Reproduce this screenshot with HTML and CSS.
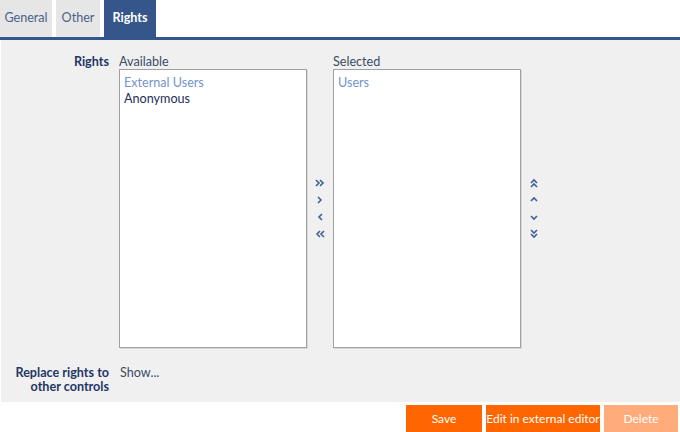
FILE: index.html
```html
<!DOCTYPE html>
<html>
<head>
<meta charset="utf-8">
<link rel="stylesheet" href="styles.css">
</head>
<body>
<div class="tabs">
  <div class="tab">General</div>
  <div class="tab">Other</div>
  <div class="tab active">Rights</div>
</div>
<div class="bar"></div>
<div class="panel">
  <div class="row rights-row">
    <div class="label">Rights</div>
    <div class="picker">
      <div class="col">
        <div class="caption">Available</div>
        <div class="listbox">
          <div class="group">External Users</div>
          <div class="item">Anonymous</div>
        </div>
      </div>
      <div class="arrows">
        <svg viewBox="0 0 10 10"><path d="M1 2l3 3-3 3M5 2l3 3-3 3"/></svg>
        <svg viewBox="0 0 10 10"><path d="M3 2l3 3-3 3"/></svg>
        <svg viewBox="0 0 10 10"><path d="M7 2l-3 3 3 3"/></svg>
        <svg viewBox="0 0 10 10"><path d="M5 2l-3 3 3 3M9 2l-3 3 3 3"/></svg>
      </div>
      <div class="col">
        <div class="caption">Selected</div>
        <div class="listbox">
          <div class="group">Users</div>
        </div>
      </div>
      <div class="arrows">
        <svg viewBox="0 0 10 10"><path d="M2 5l3-3 3 3M2 9l3-3 3 3"/></svg>
        <svg viewBox="0 0 10 10"><path d="M2 6l3-3 3 3"/></svg>
        <svg viewBox="0 0 10 10"><path d="M2 4l3 3 3-3"/></svg>
        <svg viewBox="0 0 10 10"><path d="M2 1l3 3 3-3M2 5l3 3 3-3"/></svg>
      </div>
    </div>
  </div>
  <div class="row replace-row">
    <div class="label">Replace rights to<br>other controls</div>
    <div class="value">Show...</div>
  </div>
</div>
<div class="footer">
  <button class="btn">Save</button>
  <button class="btn">Edit in external editor</button>
  <button class="btn disabled">Delete</button>
</div>
</body>
</html>
```
FILE: styles.css
```css
html, body {
  margin: 0;
  padding: 0;
  background: #fff;
}
body {
  font-family: Lato, "Open Sans", sans-serif;
  font-size: 12.6px;
  width: 680px;
  height: 432px;
  overflow: hidden;
}
.tabs {
  display: flex;
  gap: 4px;
  height: 37px;
}
.tab {
  height: 37px;
  line-height: 36px;
  background: #e6e6e6;
  color: #4b6389;
  text-align: center;
}
.tab:first-child { width: 52px; }
.tab:nth-child(2) { width: 44px; }
.tab.active {
  width: 52px;
  background: #34568a;
  color: #fff;
  font-weight: bold;
}
.bar {
  height: 3px;
  background: #34568a;
}
.panel {
  background: #f0f0f0;
  height: 347px;
  padding-top: 15px;
  margin-left: 1px;
}
.row {
  display: grid;
  grid-template-columns: 108px auto;
  column-gap: 10px;
  line-height: 13.5px;
}
.label {
  text-align: right;
  font-weight: bold;
  color: #1f3765;
}
.picker {
  display: flex;
  align-items: center;
}
.col {
  display: flex;
  flex-direction: column;
}
.caption {
  color: #3b4c66;
  height: 14px;
  line-height: 13px;
}
.listbox {
  width: 188px;
  height: 279px;
  background: #fff;
  border: 1px solid #a0a0a0;
  box-shadow: 1px 1px 0 #d8d8d8;
  padding: 5px 4px;
  box-sizing: border-box;
  line-height: 16px;
}
.group { color: #7394c9; }
.item { color: #1d2f58; }
.arrows {
  width: 26px;
  display: flex;
  flex-direction: column;
  align-items: center;
  gap: 7px;
  padding-top: 14px;
}
.arrows svg {
  width: 10px;
  height: 10px;
  fill: none;
  stroke: #3f5f99;
  stroke-width: 1.6;
}
.replace-row {
  margin-top: 18px;
}
.value {
  color: #3b4c66;
  padding-left: 1px;
}
.footer {
  display: flex;
  justify-content: flex-end;
  gap: 4px;
  padding: 3px 2px 0 0;
}
.btn {
  font-family: inherit;
  font-size: 12px;
  height: 27px;
  border: none;
  background: #ff6600;
  color: #fff;
  padding: 0;
  white-space: nowrap;
}
.btn:nth-child(1) { width: 76px; }
.btn:nth-child(2) { width: 114px; }
.btn.disabled {
  width: 74px;
  background: #ffab7a;
}
```
